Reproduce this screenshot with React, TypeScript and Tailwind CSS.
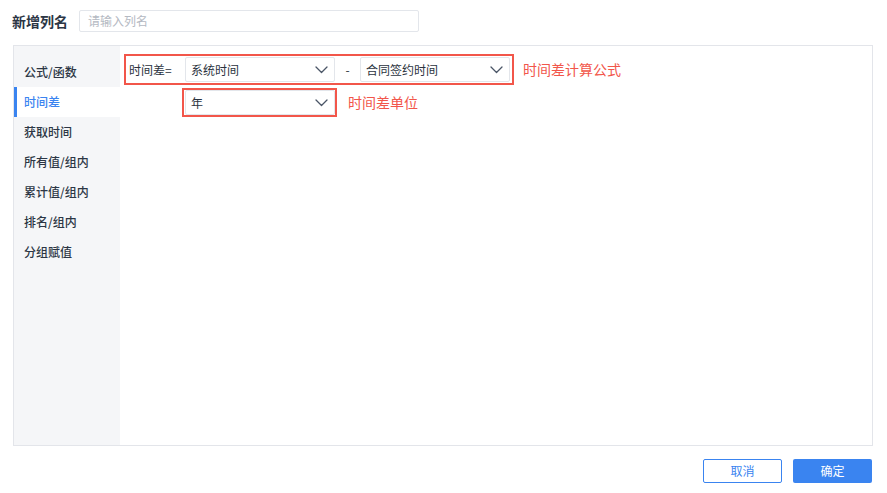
import React from 'react';

const font = { fontFamily: '"Noto Sans CJK SC", "Noto Sans", sans-serif' };

const Chevron = () => (
  <svg width="13" height="8" viewBox="0 0 13 8" fill="none" className="shrink-0">
    <path d="M1 1l5.5 5.5L12 1" stroke="#4a5566" strokeWidth="1.3" strokeLinecap="round" strokeLinejoin="round" />
  </svg>
);

const Select = ({ value }: { value: string }) => (
  <div className="flex h-[25px] w-[150px] items-center justify-between rounded-[2px] border border-[#e3e6eb] bg-white pl-[5px] pr-[6px] text-[12px] text-[#2b3340]">
    <span>{value}</span>
    <Chevron />
  </div>
);

const menu = ['公式/函数', '时间差', '获取时间', '所有值/组内', '累计值/组内', '排名/组内', '分组赋值'];

export default function App() {
  return (
    <div className="h-[493px] w-[887px] bg-white" style={font}>
      <div className="flex items-center gap-[11px] pl-[12px] pt-[10px]">
        <span className="text-[14px] font-bold text-[#2c3645]">新增列名</span>
        <div className="flex h-[22px] w-[340px] items-center rounded-[2px] border border-[#e3e6eb] px-[8px] text-[12px] text-[#b4b9c2]">
          请输入列名
        </div>
      </div>

      <div className="ml-[13px] mt-[13px] flex h-[401px] w-[860px] border border-[#e3e5ea]">
        <div className="w-[106px] shrink-0 bg-[#f5f6f8] pt-[11px]">
          {menu.map((m) => {
            const active = m === '时间差';
            return (
              <div
                key={m}
                className={
                  active
                    ? 'flex h-[30px] items-center border-l-[3px] border-[#3a84f0] bg-white pl-[7px] text-[12px] font-medium text-[#3a84f0]'
                    : 'flex h-[30px] items-center pl-[10px] text-[12px] font-medium text-[#2c3645]'
                }
              >
                {m}
              </div>
            );
          })}
        </div>

        <div className="flex-1 pl-[4px] pt-[8px]">
          <div className="flex items-center">
            <div className="flex h-[31px] w-[390px] items-center border-2 border-[#f2564a] pl-[3px]">
              <span className="w-[56px] text-[12px] text-[#2b3340]">时间差=</span>
              <Select value="系统时间" />
              <span className="w-[25px] text-center text-[12px] text-[#2b3340]">-</span>
              <Select value="合同签约时间" />
            </div>
            <span className="ml-[9px] text-[14px] text-[#f2564a]">时间差计算公式</span>
          </div>
          <div className="ml-[58px] mt-[3px] flex items-center">
            <div className="flex h-[29px] w-[155px] items-center border-2 border-[#f2564a] pl-[1px]">
              <Select value="年" />
            </div>
            <span className="ml-[11px] text-[14px] text-[#f2564a]">时间差单位</span>
          </div>
        </div>
      </div>

      <div className="mt-[13px] flex justify-end gap-[11px] pr-[15px]">
        <button className="h-[24px] w-[79px] rounded-[2px] border border-[#3a84f0] bg-white text-[12px] text-[#3a84f0]">
          取消
        </button>
        <button className="h-[24px] w-[79px] rounded-[2px] bg-[#3a84f0] text-[12px] text-white">
          确定
        </button>
      </div>
    </div>
  );
}
